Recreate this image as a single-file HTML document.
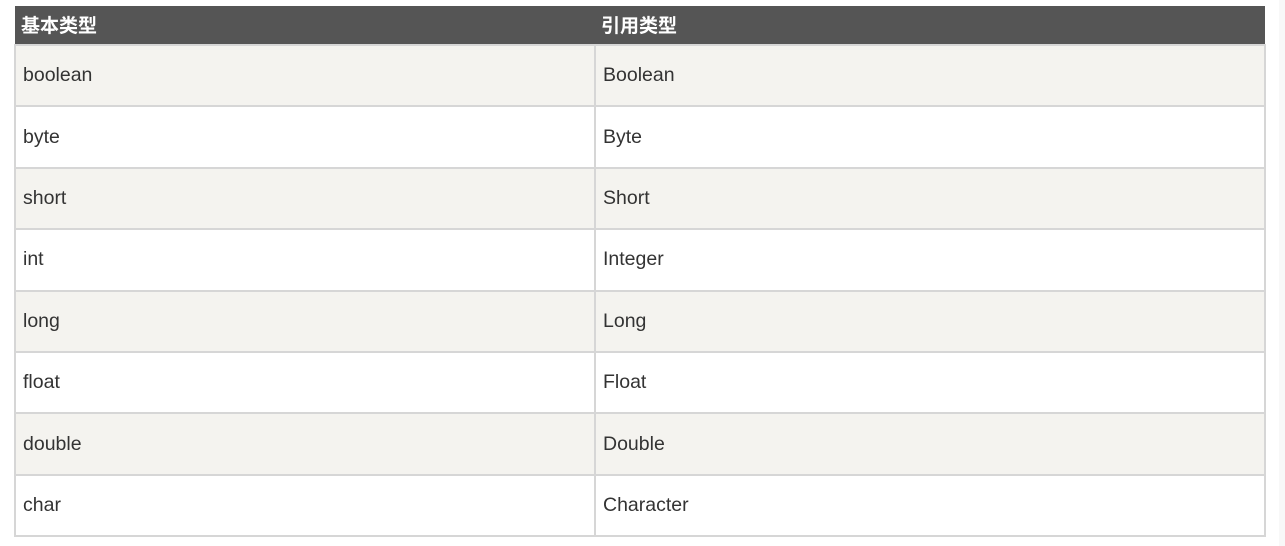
<!DOCTYPE html>
<html><head><meta charset="utf-8"><style>
html,body{margin:0;padding:0;background:#fff;width:1285px;height:546px;overflow:hidden}
.strip{position:absolute;left:1279px;top:0;width:6px;height:546px;background:#f8f8f8}
table{position:absolute;left:14px;top:6px;width:1252px;border-collapse:collapse;font-family:"Liberation Sans","Noto Sans CJK SC",sans-serif;font-size:19.5px;color:#333}
th{background:#555;color:#fff;font-weight:bold;text-align:left;height:38px;padding:0 0 0 6px;vertical-align:middle;line-height:20px;font-size:19px}
th span{position:relative;top:2px}
td{border:2px solid #d6d6d6;height:59.4px;padding:0 0 0 7px;vertical-align:middle}
tr:nth-child(odd) td{background:#f4f3ef}
tr:nth-child(even) td{background:#fff}
col.a{width:580px}
</style></head><body>
<div class="strip"></div>
<table>
<colgroup><col class="a"><col></colgroup>
<thead><tr><th><span>基本类型</span></th><th><span>引用类型</span></th></tr></thead>
<tbody>
<tr><td>boolean</td><td>Boolean</td></tr>
<tr><td>byte</td><td>Byte</td></tr>
<tr><td>short</td><td>Short</td></tr>
<tr><td>int</td><td>Integer</td></tr>
<tr><td>long</td><td>Long</td></tr>
<tr><td>float</td><td>Float</td></tr>
<tr><td>double</td><td>Double</td></tr>
<tr><td>char</td><td>Character</td></tr>
</tbody></table>
</body></html>
